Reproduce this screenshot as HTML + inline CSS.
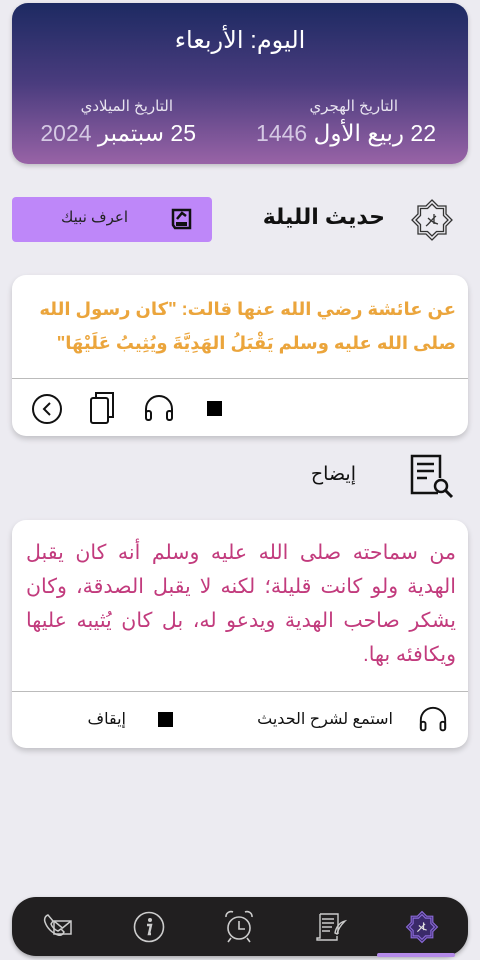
<!DOCTYPE html>
<html><head><meta charset="utf-8"><style>
*{margin:0;padding:0;box-sizing:border-box}
body{width:480px;height:960px;background:#ecebf1;position:relative;overflow:hidden;font-family:"Liberation Sans","DejaVu Sans",sans-serif}
.a{position:absolute}
.hdr{left:12px;top:3px;width:456px;height:161px;border-radius:16px;background:linear-gradient(#1d2a62,#4a3c7e 50%,#9863a6);box-shadow:0 2px 5px rgba(0,0,0,.2)}
.w{color:#fff;direction:rtl;white-space:nowrap}
.card{background:#fff;border-radius:14px;box-shadow:0 3px 6px rgba(0,0,0,.18)}
.rtl{direction:rtl;text-align:right}
</style></head><body>
<div class="a hdr"></div>
<div class="a w" style="left:0;width:480px;text-align:center;top:26px;font-size:24px">اليوم: الأربعاء</div>
<div class="a w" style="right:82px;top:97px;font-size:15px;color:#e8e4f0">التاريخ الهجري</div>
<div class="a w" style="right:44px;top:120px;font-size:23px;color:#ddd3ea"><b style="font-weight:normal;color:#fff">22 ربيع الأول</b> <span style="font-weight:300;color:#d5c9e4">1446</span></div>
<div class="a w" style="right:307px;top:97px;font-size:15px;color:#e8e4f0">التاريخ الميلادي</div>
<div class="a w" style="right:284px;top:120px;font-size:23px;color:#ddd3ea"><span style="color:#fff">25 سبتمبر</span> <span style="color:#d5c9e4">2024</span></div>

<div class="a" style="left:12px;top:197px;width:200px;height:45px;background:#be87f9;border-radius:4px"></div>
<div class="a rtl" style="right:352px;top:208px;font-size:15px;color:#222">اعرف نبيك</div>
<svg class="a" style="left:170px;top:207px" width="24" height="24" viewBox="0 0 24 24"><path d="M3 3h17v18H5l-2-3z" fill="none" stroke="#111" stroke-width="2.5"/><path d="M6 15h11v4H6z" fill="#111"/><path d="M7 12l5-6 4 3" fill="none" stroke="#111" stroke-width="2.5"/></svg>
<div class="a rtl" style="right:95px;top:204px;font-size:22px;font-weight:bold;color:#111">حديث الليلة</div>
<svg class="a" style="left:410px;top:198px" width="44" height="44" viewBox="0 0 44 44"><g fill="none" stroke="#333" stroke-width="1.3"><path d="M22 2l6 6h8v8l6 6-6 6v8h-8l-6 6-6-6H8v-8l-6-6 6-6V8h8z"/><path d="M22 6l4.5 4.5h7v7L38 22l-4.5 4.5v7h-7L22 38l-4.5-4.5h-7v-7L6 22l4.5-4.5v-7h7z"/><path d="M16 28c3-2 6-7 10-10M18 20c3 3 6 5 10 6M24 16v10"/></g></svg>

<div class="a card" style="left:12px;top:275px;width:456px;height:161px"></div>
<div class="a rtl" style="left:22px;width:434px;top:292px;font-size:18px;line-height:34px;font-weight:bold;color:#eba53c">عن عائشة رضي الله عنها قالت: "كان رسول الله صلى الله عليه وسلم يَقْبَلُ الهَدِيَّةَ ويُثِيبُ عَلَيْهَا"</div>
<div class="a" style="left:12px;top:378px;width:456px;height:1px;background:#bbb"></div>
<svg class="a" style="left:31px;top:393px" width="32" height="32" viewBox="0 0 32 32"><circle cx="16" cy="16" r="14" fill="none" stroke="#111" stroke-width="2"/><path d="M19 10l-6 6 6 6" fill="none" stroke="#111" stroke-width="2"/></svg>
<svg class="a" style="left:89px;top:391px" width="28" height="34" viewBox="0 0 28 34"><rect x="2" y="7" width="17" height="25" rx="2" fill="none" stroke="#111" stroke-width="2"/><path d="M7 6V2h17v24h-4" fill="none" stroke="#111" stroke-width="2"/></svg>
<svg class="a" style="left:143px;top:394px" width="32" height="28" viewBox="0 0 32 28"><path d="M3 24V15a13 13 0 0 1 26 0v9" fill="none" stroke="#111" stroke-width="2"/><rect x="3" y="17" width="5" height="9" rx="2" fill="none" stroke="#111" stroke-width="2"/><rect x="24" y="17" width="5" height="9" rx="2" fill="none" stroke="#111" stroke-width="2"/></svg>
<div class="a" style="left:207px;top:401px;width:15px;height:15px;background:#000"></div>

<svg class="a" style="left:408px;top:453px" width="46" height="46" viewBox="0 0 46 46"><path d="M30 40H4V3h28v22" fill="none" stroke="#111" stroke-width="2.5"/><path d="M9 11h17M9 18h17M9 25h10" stroke="#111" stroke-width="2.5"/><circle cx="33" cy="33" r="6" fill="none" stroke="#111" stroke-width="2.5"/><path d="M37 37l7 7" stroke="#111" stroke-width="3"/></svg>
<div class="a rtl" style="right:124px;top:463px;font-size:19px;color:#111">إيضاح</div>

<div class="a card" style="left:12px;top:520px;width:456px;height:228px"></div>
<div class="a rtl" style="left:26px;width:430px;top:536px;font-size:20.5px;line-height:34px;color:#c23b7d;text-align:justify;text-align-last:right">من سماحته صلى الله عليه وسلم أنه كان يقبل الهدية ولو كانت قليلة؛ لكنه لا يقبل الصدقة، وكان يشكر صاحب الهدية ويدعو له، بل كان يُثيبه عليها ويكافئه بها.</div>
<div class="a" style="left:12px;top:691px;width:456px;height:1px;background:#bbb"></div>
<svg class="a" style="left:418px;top:705px" width="30" height="28" viewBox="0 0 32 28"><path d="M3 24V15a13 13 0 0 1 26 0v9" fill="none" stroke="#111" stroke-width="2"/><rect x="3" y="17" width="5" height="9" rx="2" fill="none" stroke="#111" stroke-width="2"/><rect x="24" y="17" width="5" height="9" rx="2" fill="none" stroke="#111" stroke-width="2"/></svg>
<div class="a rtl" style="right:87px;top:709px;font-size:16px;color:#111">استمع لشرح الحديث</div>
<div class="a" style="left:158px;top:712px;width:15px;height:15px;background:#000"></div>
<div class="a rtl" style="right:354px;top:709px;font-size:16px;color:#111">إيقاف</div>

<div class="a" style="left:12px;top:897px;width:456px;height:59px;background:#211f20;border-radius:24px;box-shadow:0 2px 4px rgba(0,0,0,.3)"></div>
<div class="a" style="left:377px;top:953px;width:78px;height:4px;background:#b48ae8;border-radius:2px"></div>
<svg class="a" style="left:42px;top:912px" width="32" height="30" viewBox="0 0 32 30"><g fill="none" stroke="#ccc" stroke-width="1.5"><path d="M6 3c-3 1-4 4-3 7 2 6 7 11 13 13 3 1 5-1 6-3l-3-3-3 2c-3-1-6-4-7-7l2-3z"/><rect x="12" y="9" width="17" height="13"/><path d="M12 9l8.5 7L29 9"/></g></svg>
<svg class="a" style="left:133px;top:911px" width="32" height="32" viewBox="0 0 32 32"><circle cx="16" cy="16" r="14.5" fill="none" stroke="#ccc" stroke-width="1.6"/><circle cx="17" cy="9" r="2" fill="#ccc"/><path d="M14 14h4l-2 9h2" fill="none" stroke="#ccc" stroke-width="2.4"/></svg>
<svg class="a" style="left:223px;top:909px" width="32" height="35" viewBox="0 0 32 35"><g fill="none" stroke="#ccc" stroke-width="1.6"><circle cx="16" cy="19" r="11"/><path d="M16 12v8h6M3 8a5 5 0 0 1 7-5M29 8a5 5 0 0 0-7-5M8 29l-3 4M24 29l3 4"/></g></svg>
<svg class="a" style="left:315px;top:911px" width="32" height="32" viewBox="0 0 32 32"><g fill="none" stroke="#ccc" stroke-width="1.4"><path d="M5 3h18v20M5 3v24H2v2h20v-4M7 8h12M7 12h12M7 16h10M7 20h8"/><path d="M30 10c-5 1-9 6-10 12l2 1c1-5 4-9 8-13z"/></g></svg>
<svg class="a" style="left:405px;top:910px" width="34" height="34" viewBox="0 0 44 44"><g fill="#3a2a6a" stroke="#8b6ad8" stroke-width="1.5"><path d="M22 2l6 6h8v8l6 6-6 6v8h-8l-6 6-6-6H8v-8l-6-6 6-6V8h8z"/><path d="M22 6l4.5 4.5h7v7L38 22l-4.5 4.5v7h-7L22 38l-4.5-4.5h-7v-7L6 22l4.5-4.5v-7h7z"/><path fill="none" stroke="#ddd" d="M16 28c3-2 6-7 10-10M18 20c3 3 6 5 10 6M24 16v10"/></g></svg>
</body></html>
